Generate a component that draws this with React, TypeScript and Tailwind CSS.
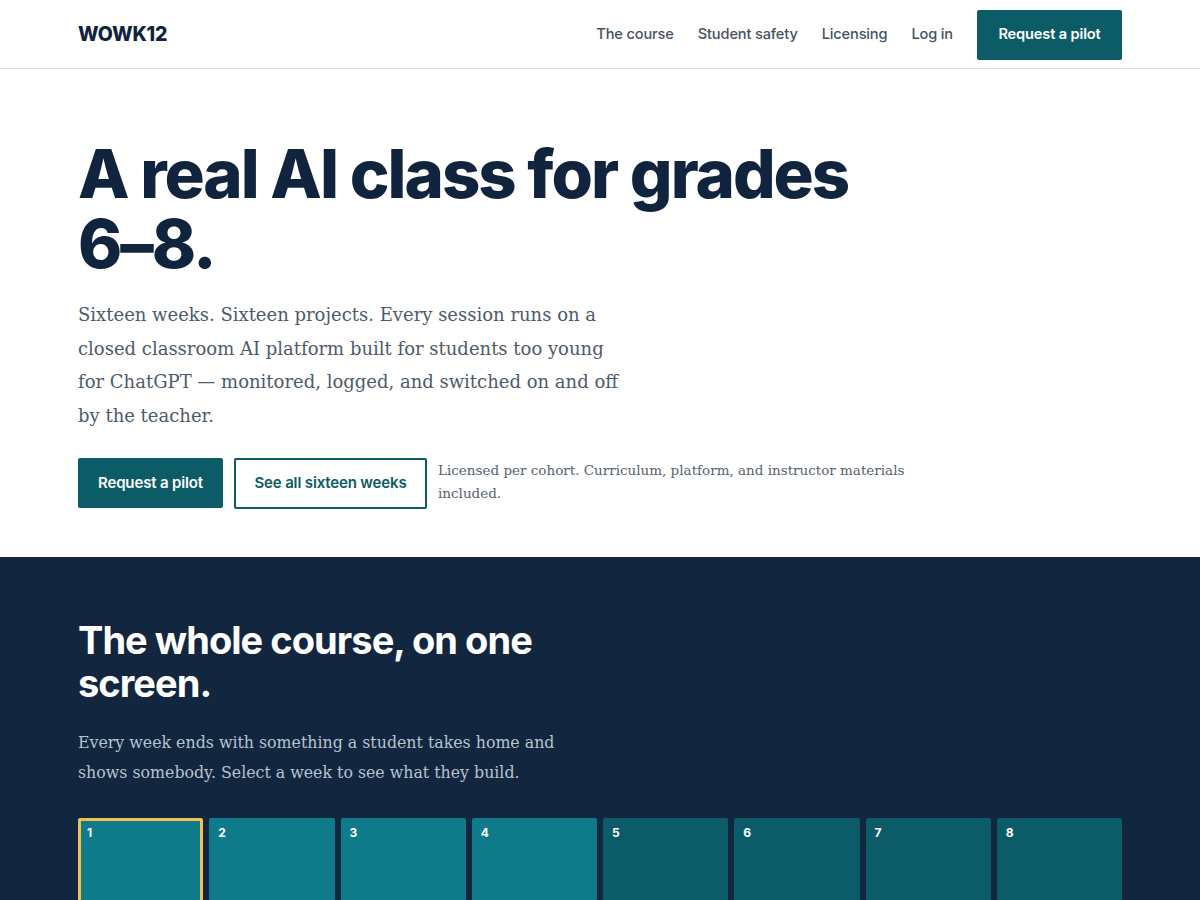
const weeks = Array.from({ length: 16 }, (_, i) => i + 1)

const sans = 'font-["Inter","Liberation_Sans",sans-serif]'
const serif = 'font-["DejaVu_Serif","Liberation_Serif",serif]'

function Header() {
  return (
    <header className="border-b border-[#dde1e5] bg-white">
      <div className="mx-auto flex h-[68px] max-w-[1044px] items-center justify-between pt-[1px]">
        <a className={`${sans} text-[19.5px] font-extrabold tracking-[-0.01em] text-[#10253d]`}>WOWK12</a>
        <nav className={`${sans} flex items-center text-[14.6px] font-medium tracking-[-0.01em] text-[#46525f]`}>
          <a className="mr-6">The course</a>
          <a className="mr-6">Student safety</a>
          <a className="mr-6">Licensing</a>
          <a className="mr-6">Log in</a>
          <a className="flex h-[50px] w-[145px] items-center justify-center rounded-[2px] bg-[#0b5c66] font-semibold text-white">
            Request a pilot
          </a>
        </nav>
      </div>
    </header>
  )
}

function Hero() {
  return (
    <section className="bg-white">
      <div className="mx-auto max-w-[1044px] pt-[70px] pb-[48px]">
        <h1 className={`${sans} max-w-[830px] text-[67px] leading-[70px] font-extrabold tracking-[-0.03em] text-[#10253d]`}>
          A real AI class for grades 6–8.
        </h1>
        <p className={`${serif} mt-[19px] max-w-[552px] text-[18px] leading-[33.5px] text-[#4d5b6a]`}>
          Sixteen weeks. Sixteen projects. Every session runs on a closed classroom AI platform built for students too
          young for ChatGPT — monitored, logged, and switched on and off by the teacher.
        </p>
        <div className="mt-[26px] flex items-start gap-[11px]">
          <a className={`${sans} flex h-[50px] w-[145px] items-center justify-center rounded-[2px] bg-[#0b5c66] text-[15px] font-semibold tracking-[-0.01em] text-white`}>
            Request a pilot
          </a>
          <a className={`${sans} flex h-[51px] w-[193px] items-center justify-center rounded-[2px] border-2 border-[#0b5c66] text-[15px] font-semibold tracking-[-0.01em] text-[#0b5c66]`}>
            See all sixteen weeks
          </a>
          <p className={`${serif} mt-[1px] max-w-[475px] text-[13.5px] leading-[23px] text-[#56636f]`}>
            Licensed per cohort. Curriculum, platform, and instructor materials included.
          </p>
        </div>
      </div>
    </section>
  )
}

function Course() {
  return (
    <section className="bg-[#12263f]">
      <div className="mx-auto max-w-[1044px] pt-[62px] pb-[60px]">
        <h2 className={`${sans} max-w-[490px] text-[38px] leading-[43px] font-bold tracking-[-0.025em] text-white`}>
          The whole course, on one screen.
        </h2>
        <p className={`${serif} mt-[23px] max-w-[490px] text-[15.8px] leading-[29.5px] text-[#b7c3d1]`}>
          Every week ends with something a student takes home and shows somebody. Select a week to see what they build.
        </p>
        <div className="mt-[31px] grid grid-cols-8 gap-[6px]">
          {weeks.map((w) => (
            <button
              key={w}
              className={`flex h-[110px] items-start justify-start rounded-[2px] text-left ${
                w <= 4 ? 'bg-[#0f7a89]' : 'bg-[#0b5c68]'
              } ${w === 1 ? 'border-[3px] border-[#f1c24f] px-[6px] py-[4px]' : 'px-[9px] py-[7px]'}`}
            >
              <span className={`${sans} text-[12px] leading-[16px] font-bold text-white`}>{w}</span>
            </button>
          ))}
        </div>
      </div>
    </section>
  )
}

export default function App() {
  return (
    <div className="min-h-screen bg-white">
      <Header />
      <Hero />
      <Course />
    </div>
  )
}
